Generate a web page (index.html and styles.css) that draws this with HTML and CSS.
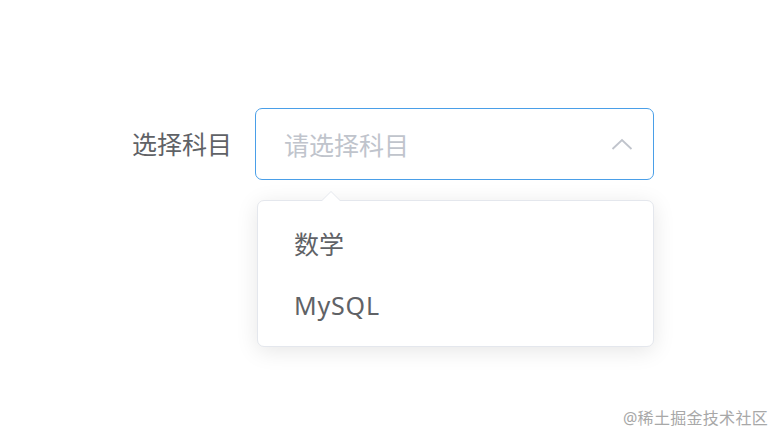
FILE: index.html
```html
<!DOCTYPE html>
<html lang="zh-CN">
<head>
<meta charset="utf-8">
<link rel="stylesheet" href="styles.css">
</head>
<body>
<div class="page">
  <div class="form-item">
    <label class="label">选择科目</label>
    <div class="select">
      <div class="input">
        <span class="placeholder">请选择科目</span>
        <svg class="chevron" width="22" height="14" viewBox="0 0 22 14"><path d="M1.5 12 L11 3 L20.5 12" fill="none" stroke="#c0c4cc" stroke-width="1.8"/></svg>
      </div>
      <div class="dropdown">
        <div class="popper-arrow"></div>
        <ul class="list">
          <li class="item">数学</li>
          <li class="item latin">MySQL</li>
        </ul>
      </div>
    </div>
  </div>
  <div class="watermark">@稀土掘金技术社区</div>
</div>
</body>
</html>
```

FILE: styles.css
```css
* { box-sizing: border-box; }
html, body { margin: 0; padding: 0; background: #fff; }
body {
  width: 782px;
  height: 444px;
  overflow: hidden;
  font-family: "Noto Sans", "Noto Sans CJK SC", sans-serif;
}
.page {
  position: relative;
  width: 782px;
  height: 444px;
  padding-top: 108px;
}
.form-item {
  display: flex;
  align-items: flex-start;
  padding-left: 132px;
}
.label {
  width: 123px;
  padding-right: 21px;
  height: 72px;
  line-height: 72px;
  font-size: 25px;
  color: #606266;
  white-space: nowrap;
}
.select {
  position: relative;
  width: 399px;
}
.input {
  height: 72px;
  border: 1px solid #4a9fe8;
  border-radius: 7px;
  display: flex;
  align-items: center;
  justify-content: space-between;
  padding: 0 20px 0 28px;
}
.placeholder {
  font-size: 25px;
  color: #c0c4cc;
}
.chevron { display: block; margin-top: -1px; }
.dropdown {
  position: absolute;
  left: 2px;
  top: 92px;
  width: 397px;
  background: #fff;
  border: 1px solid #e4e7ed;
  border-radius: 7px;
  box-shadow: 0 4px 22px rgba(0, 0, 0, 0.1);
}
.popper-arrow {
  position: absolute;
  top: -10px;
  left: 63px;
  width: 0;
  height: 0;
  border-left: 10px solid transparent;
  border-right: 10px solid transparent;
  border-bottom: 10px solid #e4e7ed;
}
.popper-arrow::after {
  content: "";
  position: absolute;
  left: -9px;
  top: 1px;
  border-left: 9px solid transparent;
  border-right: 9px solid transparent;
  border-bottom: 9px solid #fff;
}
.list {
  list-style: none;
  margin: 0;
  padding: 13px 0 10px;
}
.item {
  height: 61px;
  line-height: 61px;
  padding: 0 36px;
  font-size: 25px;
  color: #606266;
}
.latin { letter-spacing: 0.8px; }
.watermark {
  position: absolute;
  right: 14px;
  top: 407px;
  font-size: 16px;
  line-height: 22px;
  color: #a8a8a8;
  letter-spacing: 0.3px;
}
```
